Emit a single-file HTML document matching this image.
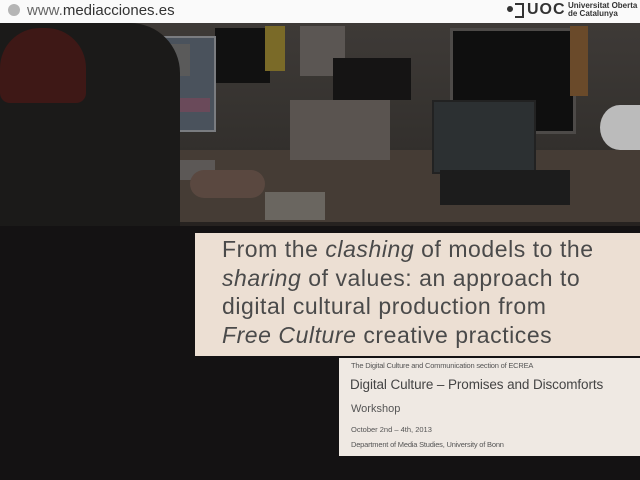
<!DOCTYPE html>
<html><head><style>
body{margin:0;width:640px;height:480px;background:#141213;position:relative;overflow:hidden;font-family:"Liberation Sans",sans-serif}
.a{position:absolute;white-space:nowrap}
</style></head><body>
<div class="a" style="left:0;top:0;width:640px;height:23px;background:#fafafa"></div>
<div class="a" style="left:8px;top:4px;width:12px;height:12px;border-radius:50%;background:#b5b5b5"></div>
<div class="a" style="left:27px;top:2px;font-size:15px;color:#666">www.<span style="color:#333">mediacciones.es</span></div>
<div class="a" style="left:507px;top:6px;width:6px;height:6px;border-radius:50%;background:#333"></div>
<div class="a" style="left:515px;top:3px;width:7px;height:11px;border:2px solid #333;border-left:none"></div>
<div class="a" style="left:527px;top:1px;font-size:16px;font-weight:bold;color:#333;letter-spacing:1px">UOC</div>
<div class="a" style="left:568px;top:2px;font-size:8px;line-height:8px;color:#333;font-weight:bold">Universitat Oberta<br>de Catalunya</div>
<!-- photo -->
<div class="a" style="left:0;top:23px;width:640px;height:203px;background:linear-gradient(#3e3a37,#33302d 60%,#262220)"></div>
<div class="a" style="left:100px;top:150px;width:540px;height:72px;background:#453c35"></div>
<div class="a" style="left:215px;top:28px;width:55px;height:55px;background:#111"></div>
<div class="a" style="left:265px;top:26px;width:20px;height:45px;background:#7a6a28"></div>
<div class="a" style="left:300px;top:26px;width:45px;height:50px;background:#5b5653"></div>
<div class="a" style="left:333px;top:58px;width:78px;height:42px;background:#151414"></div>
<div class="a" style="left:450px;top:28px;width:120px;height:100px;background:#0f0f0f;border:3px solid #4d4a48"></div>
<div class="a" style="left:570px;top:26px;width:18px;height:70px;background:#6a4a2a"></div>
<div class="a" style="left:82px;top:36px;width:130px;height:92px;background:#4a525c;border:2px solid #7a7c80"></div>
<div class="a" style="left:125px;top:44px;width:65px;height:32px;background:#5a5a5a"></div>
<div class="a" style="left:84px;top:98px;width:126px;height:14px;background:#6a4a5a"></div>
<div class="a" style="left:120px;top:160px;width:95px;height:20px;background:#5c5856"></div>
<div class="a" style="left:290px;top:100px;width:100px;height:60px;background:#5a5450"></div>
<div class="a" style="left:432px;top:100px;width:100px;height:70px;background:#2c3032;border:2px solid #222"></div>
<div class="a" style="left:440px;top:170px;width:130px;height:35px;background:#1c1c1c"></div>
<div class="a" style="left:600px;top:105px;width:40px;height:45px;border-radius:50% 0 0 50%;background:#bbb"></div>
<div class="a" style="left:0;top:23px;width:180px;height:203px;background:#1b1a19;border-radius:0 50px 0 0"></div>
<div class="a" style="left:0;top:28px;width:86px;height:75px;background:#3e1816;border-radius:40px 40px 10px 10px"></div>
<div class="a" style="left:190px;top:170px;width:75px;height:28px;background:#5a4840;border-radius:15px"></div>
<div class="a" style="left:265px;top:192px;width:60px;height:28px;background:#6a6660"></div>
<!-- title box -->
<div class="a" style="left:195px;top:233px;width:445px;height:123px;background:#ecdfd3"></div>
<div class="a" style="left:222px;top:235px;font-size:23px;letter-spacing:0.55px;line-height:28.5px;color:#4a4a4a">From the <i>clashing</i> of models to the<br><i>sharing</i> of values: an approach to<br>digital cultural production from<br><i>Free Culture</i> creative practices</div>
<div class="a" style="left:339px;top:358px;width:301px;height:98px;background:#efe9e3"></div>
<div class="a" style="left:351px;top:361px;font-size:7.5px;color:#555;letter-spacing:-0.2px">The Digital Culture and Communication section of ECREA</div>
<div class="a" style="left:350px;top:377px;font-size:13.5px;color:#444;letter-spacing:-0.1px">Digital Culture – Promises and Discomforts</div>
<div class="a" style="left:351px;top:403px;font-size:11px;color:#555">Workshop</div>
<div class="a" style="left:351px;top:425px;font-size:7.5px;color:#555">October 2nd – 4th, 2013</div>
<div class="a" style="left:351px;top:440px;font-size:7.5px;color:#555;letter-spacing:-0.2px">Department of Media Studies, University of Bonn</div>
</body></html>
